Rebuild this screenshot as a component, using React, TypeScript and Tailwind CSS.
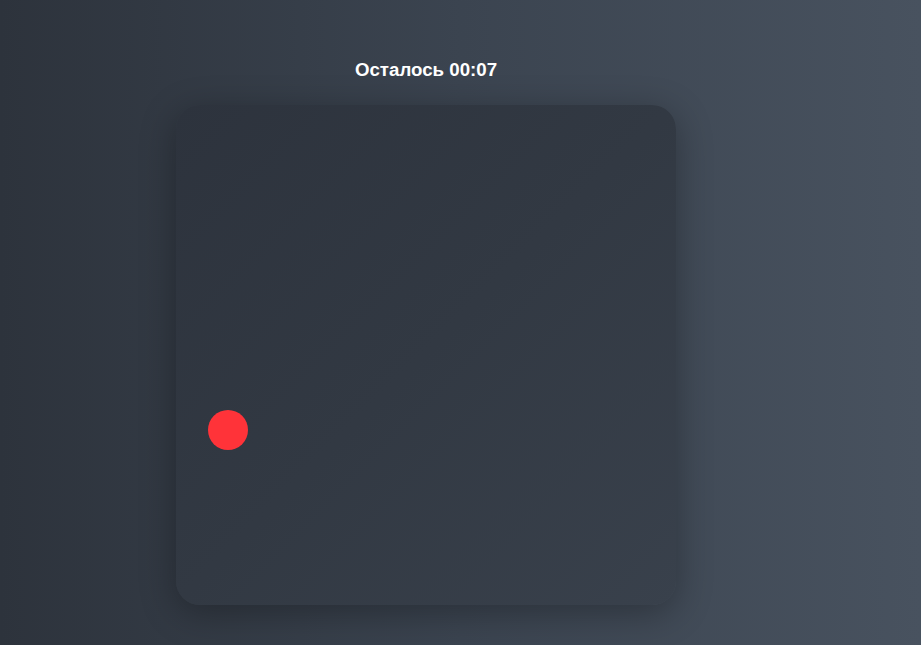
export default function App() {
  return (
    <div
      className="min-h-[645px] w-full bg-gradient-to-r from-[#2d333c] via-[#3b4450] to-[#48525f] pt-[55px] pl-[176px]"
      style={{ fontFamily: '"Liberation Sans", Arial, sans-serif' }}
    >
      <div className="flex w-[500px] flex-col items-center">
        {/* Timer */}
        <h1 className="mb-[22px] h-7 pt-px text-[18.7px] leading-7 font-bold text-white">Осталось 00:07</h1>

        {/* Play field */}
        <div className="relative h-[500px] w-[500px] rounded-3xl bg-gradient-to-br from-[#2d333d] via-[#323943] to-[#39414c] shadow-[0_8px_36px_rgba(0,0,0,0.3)]">
          <div className="absolute left-[32px] top-[305px] h-10 w-10 rounded-full bg-[#ff3339]"></div>
        </div>
      </div>
    </div>
  );
}
